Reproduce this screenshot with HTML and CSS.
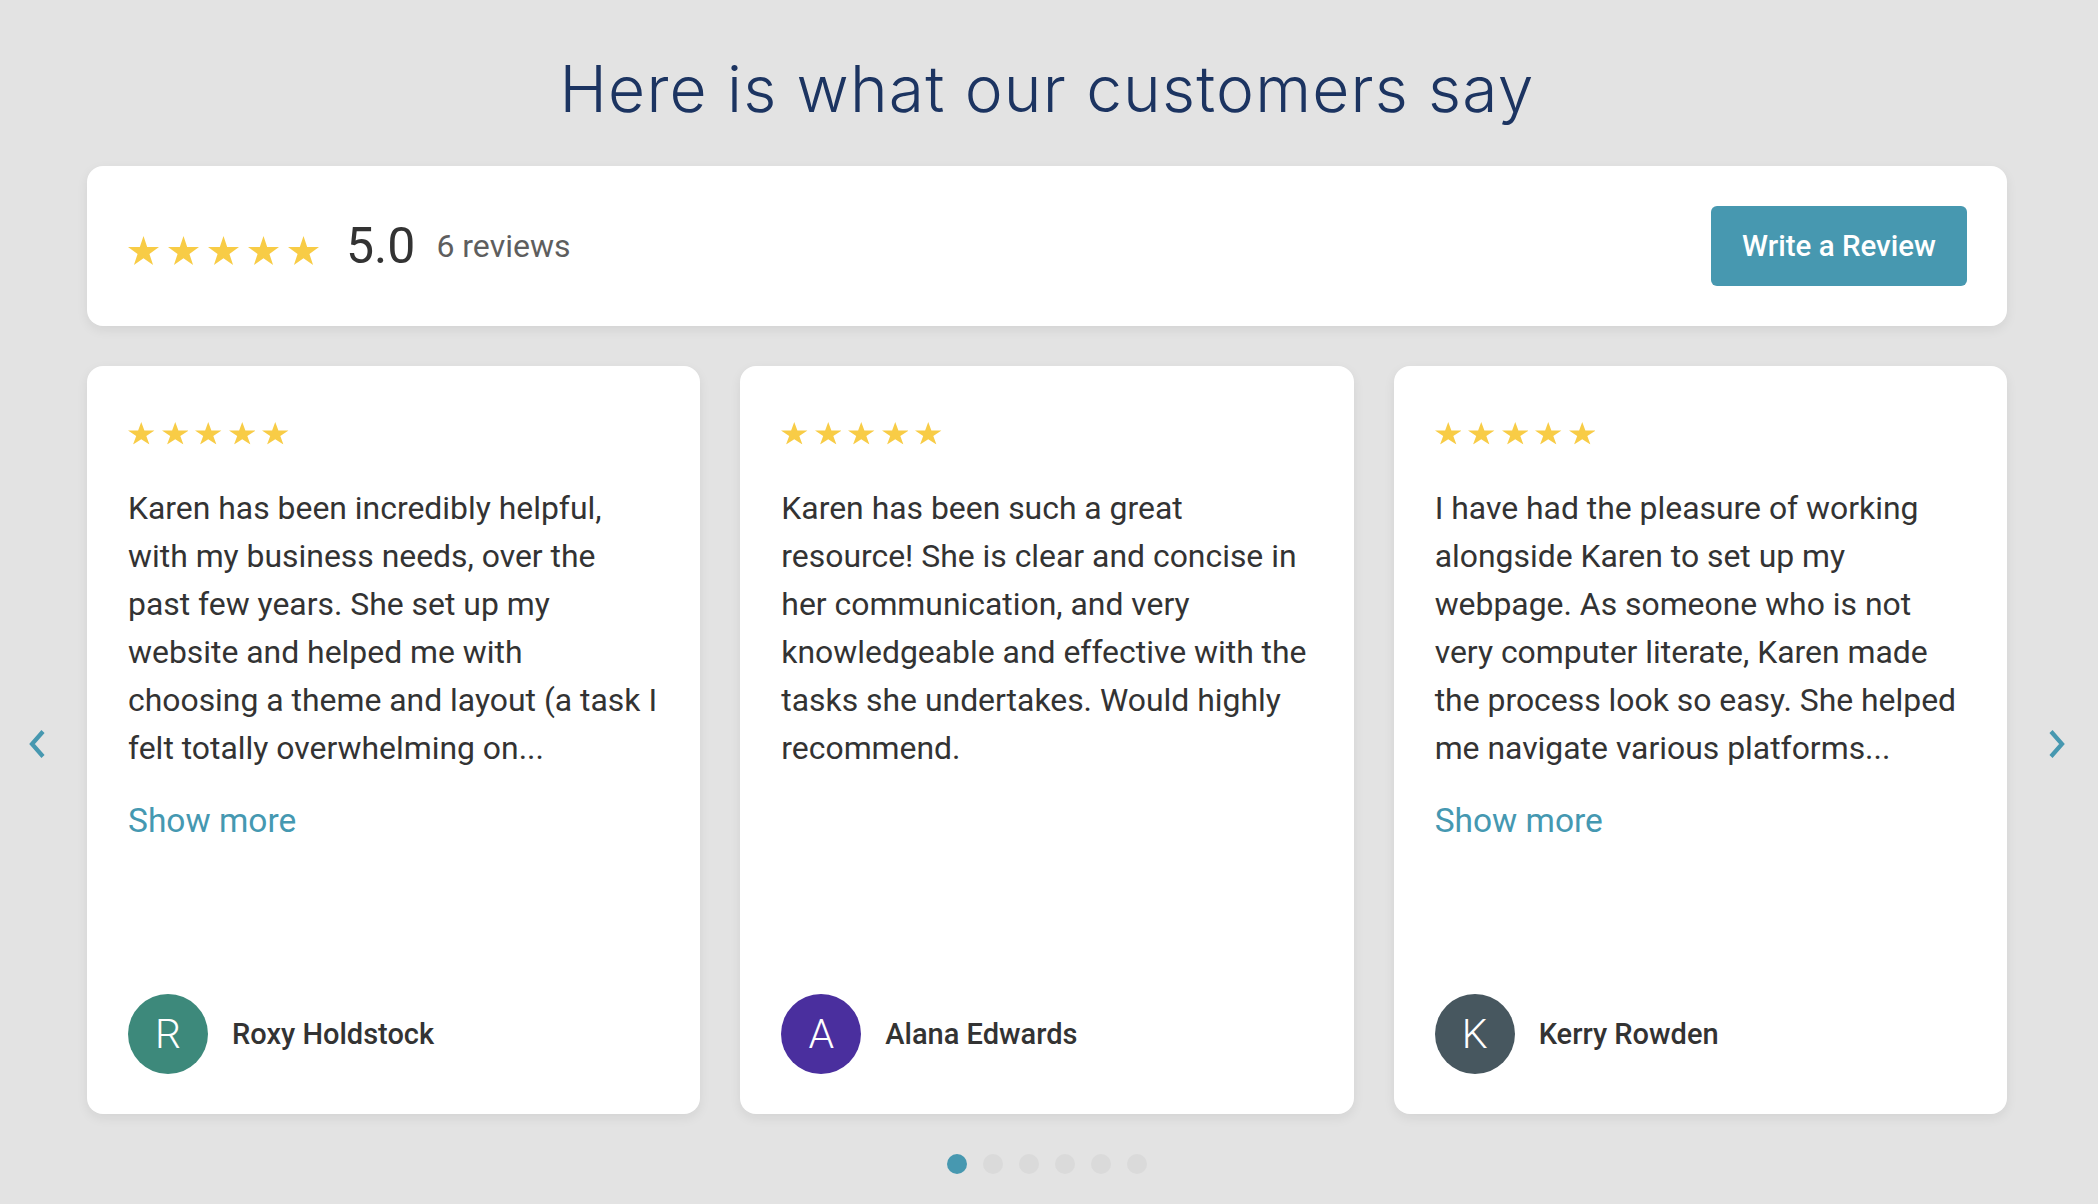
FILE: index.html
```html
<!DOCTYPE html>
<html lang="en">
<head>
<meta charset="utf-8">
<title>Customer reviews</title>
<link rel="stylesheet" href="styles.css">
</head>
<body>
<svg class="defs" width="0" height="0" aria-hidden="true">
  <symbol id="star" viewBox="-95.1 -100 190.2 180.9" preserveAspectRatio="none">
    <polygon points="0,-100 22.45,-30.9 95.1,-30.9 36.3,11.8 58.8,80.9 0,38.2 -58.8,80.9 -36.3,11.8 -95.1,-30.9 -22.45,-30.9"/>
  </symbol>
</svg>
<main class="wrap">
  <h1 class="title">Here is what our customers say</h1>

  <section class="summary">
    <div class="summary-left">
      <div class="stars stars-lg">
        <svg><use href="#star"/></svg><svg><use href="#star"/></svg><svg><use href="#star"/></svg><svg><use href="#star"/></svg><svg><use href="#star"/></svg>
      </div>
      <span class="score">5.0</span>
      <span class="count">6 reviews</span>
    </div>
    <button class="write-btn" type="button">Write a Review</button>
  </section>

  <button class="arrow arrow-left" type="button" aria-label="Previous">
    <svg width="16" height="28" viewBox="0 0 16 28"><polyline points="14,1.5 3,14 14,26.5" fill="none" stroke="currentColor" stroke-width="4.2" stroke-linejoin="miter"/></svg>
  </button>

  <section class="cards">
    <article class="card">
      <div class="stars stars-sm">
        <svg><use href="#star"/></svg><svg><use href="#star"/></svg><svg><use href="#star"/></svg><svg><use href="#star"/></svg><svg><use href="#star"/></svg>
      </div>
      <p class="text">Karen has been incredibly helpful, with my business needs, over the past few years. She set up my website and helped me with choosing a theme and layout (a task I felt totally overwhelming on...</p>
      <a class="more" href="#">Show more</a>
      <div class="author">
        <span class="avatar av-r">R</span>
        <span class="name">Roxy Holdstock</span>
      </div>
    </article>
    <article class="card">
      <div class="stars stars-sm">
        <svg><use href="#star"/></svg><svg><use href="#star"/></svg><svg><use href="#star"/></svg><svg><use href="#star"/></svg><svg><use href="#star"/></svg>
      </div>
      <p class="text">Karen has been such a great resource! She is clear and concise in her communication, and very knowledgeable and effective with the tasks she undertakes. Would highly recommend.</p>
      <div class="author">
        <span class="avatar av-a">A</span>
        <span class="name">Alana Edwards</span>
      </div>
    </article>
    <article class="card">
      <div class="stars stars-sm">
        <svg><use href="#star"/></svg><svg><use href="#star"/></svg><svg><use href="#star"/></svg><svg><use href="#star"/></svg><svg><use href="#star"/></svg>
      </div>
      <p class="text">I have had the pleasure of working alongside Karen to set up my webpage. As someone who is not very computer literate, Karen made the process look so easy. She helped me navigate various platforms...</p>
      <a class="more" href="#">Show more</a>
      <div class="author">
        <span class="avatar av-k">K</span>
        <span class="name">Kerry Rowden</span>
      </div>
    </article>
  </section>

  <button class="arrow arrow-right" type="button" aria-label="Next">
    <svg width="16" height="28" viewBox="0 0 16 28"><polyline points="2,1.5 13,14 2,26.5" fill="none" stroke="currentColor" stroke-width="4.2" stroke-linejoin="miter"/></svg>
  </button>

  <nav class="dots">
    <span class="dot active"></span><span class="dot"></span><span class="dot"></span><span class="dot"></span><span class="dot"></span><span class="dot"></span>
  </nav>
</main>
</body>
</html>
```

FILE: styles.css
```css
* { box-sizing: border-box; }

html, body {
  margin: 0;
  padding: 0;
  background: #e3e3e3;
}

body {
  font-family: Roboto, "Liberation Sans", Arial, sans-serif;
  color: #333;
  width: 2098px;
  height: 1204px;
  overflow: hidden;
}

.defs { position: absolute; }

.wrap {
  display: grid;
  grid-template-columns: 87px 1920px 91px;
  align-items: center;
}

.title {
  grid-column: 2;
  margin: 51px 0 39px;
  text-align: center;
  font-family: Inter, "Open Sans", sans-serif;
  font-weight: 300;
  font-size: 64px;
  line-height: 76px;
  color: #1c3461;
  letter-spacing: 1.2px;
}

.summary {
  grid-column: 2;
  height: 160px;
  margin-bottom: 40px;
  background: #fff;
  border-radius: 16px;
  box-shadow: 0 4px 12px rgba(0, 0, 0, 0.07);
  padding: 0 40px 0 41px;
  display: flex;
  align-items: center;
  justify-content: space-between;
}

.summary-left {
  display: flex;
  align-items: center;
}

.stars {
  display: flex;
  fill: #f8cc46;
}

.stars-lg { gap: 9px; margin-top: 8px; }
.stars-lg svg { width: 31px; height: 29px; }

.stars-sm { gap: 7px; margin-top: 16px; }
.stars-sm svg { width: 26.5px; height: 22.5px; }

.score {
  margin-left: 27px;
  font-size: 50px;
  line-height: 60px;
  color: #333;
}

.count {
  margin-left: 21px;
  font-size: 32px;
  line-height: 40px;
  color: #5e5e5e;
}

.write-btn {
  width: 256px;
  height: 80px;
  border: 0;
  border-radius: 6px;
  background: #4798b0;
  color: #fff;
  font-family: Roboto, sans-serif;
  font-weight: 500;
  font-size: 29.5px;
  padding: 0;
  cursor: pointer;
}

.arrow {
  border: 0;
  background: none;
  padding: 0;
  color: #4798b0;
  display: flex;
  cursor: pointer;
  margin-top: 8px;
}
.arrow-left { grid-column: 1; justify-self: start; margin-left: 29px; }
.arrow-right { grid-column: 3; justify-self: start; margin-left: 42px; }

.cards {
  grid-column: 2;
  display: grid;
  grid-template-columns: repeat(3, 1fr);
  gap: 40px;
}

.card {
  height: 748px;
  background: #fff;
  border-radius: 16px;
  box-shadow: 0 4px 12px rgba(0, 0, 0, 0.07);
  padding: 40px 41px 40px 41px;
  display: flex;
  flex-direction: column;
}

.text {
  margin: 39px 0 0;
  font-size: 31.9px;
  line-height: 48px;
  color: #333;
}

.more {
  margin-top: 25px;
  font-size: 33.5px;
  line-height: 48px;
  color: #4598b1;
  text-decoration: none;
}

.author {
  margin-top: auto;
  display: flex;
  align-items: center;
}

.avatar {
  width: 80px;
  height: 80px;
  border-radius: 50%;
  display: flex;
  align-items: center;
  justify-content: center;
  color: #fff;
  font-weight: 300;
  font-size: 41px;
  flex: none;
}
.av-r { background: #3d897b; }
.av-a { background: #4a2f9e; }
.av-k { background: #47575f; }

.name {
  margin-left: 24px;
  font-size: 29px;
  font-weight: 500;
  color: #333;
}

.dots {
  grid-column: 2;
  margin-top: 40px;
  display: flex;
  justify-content: center;
  gap: 16px;
}

.dot {
  width: 20px;
  height: 20px;
  border-radius: 50%;
  background: #dadada;
}
.dot.active { background: #4798b0; }
```
